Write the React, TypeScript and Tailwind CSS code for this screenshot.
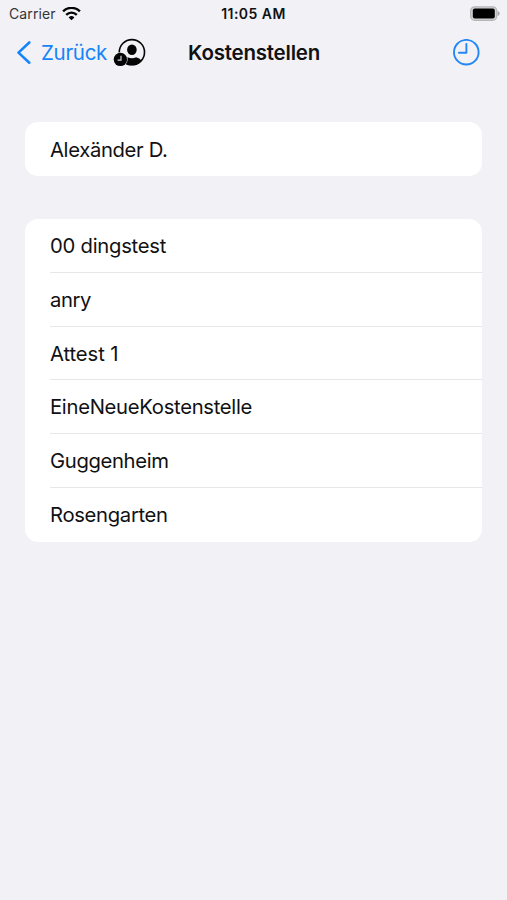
const costCenters = [
  { name: "00 dingstest", tracking: "tracking-[-0.25px]" },
  { name: "anry", tracking: "tracking-[-0.4px]" },
  { name: "Attest 1", tracking: "tracking-[-0.1px]" },
  { name: "EineNeueKostenstelle", tracking: "tracking-[-0.3px]" },
  { name: "Guggenheim", tracking: "tracking-[-0.35px]" },
  { name: "Rosengarten", tracking: "tracking-[-0.32px]" },
];

function WifiIcon() {
  return (
    <svg className="ml-[6px] h-[14px] w-[19px]" viewBox="0 0 19 14" fill="none">
      <path d="M1.1 4.4a11.8 11.8 0 0 1 16.8 0" stroke="#050505" strokeWidth="2.4" />
      <path d="M4.2 7.9a7.5 7.5 0 0 1 10.6 0" stroke="#050505" strokeWidth="2.3" />
      <path d="M9.5 13.2 6.6 10.4a4.2 4.2 0 0 1 5.8 0Z" fill="#050505" />
    </svg>
  );
}

function BatteryIcon() {
  return (
    <svg className="h-[16px] w-[32px]" viewBox="0 0 32 16">
      <rect x="2.7" y="0.9" width="26" height="13.4" rx="4" fill="#d3d3d5" stroke="#b5b5b7" strokeWidth="1.3" />
      <rect x="4.8" y="2.6" width="22" height="10" rx="2" fill="#000" />
      <path d="M29.6 5.1c1.5.4 2 1.3 2 2.4s-.5 2-2 2.5Z" fill="#a5a5a8" />
    </svg>
  );
}

function PersonClockIcon() {
  return (
    <svg className="ml-[6px] h-[30px] w-[34px]" viewBox="0 0 34 30">
      <defs>
        <clipPath id="portrait">
          <circle cx="18.9" cy="14.2" r="13" />
        </clipPath>
      </defs>
      <circle cx="18.9" cy="14.2" r="12.6" fill="none" stroke="#050505" strokeWidth="1.6" />
      <g clipPath="url(#portrait)" fill="#050505">
        <ellipse cx="18.9" cy="11.8" rx="4.8" ry="5.2" />
        <path d="M9 30c0-7.5 2.8-9.8 5.7-10.7 2.6 1.2 5.8 1.2 8.4 0 3.9 1 6.9 3.2 6.9 10.7Z" />
      </g>
      <circle cx="7.4" cy="21.4" r="7.2" fill="#f1f1f6" />
      <circle cx="7.4" cy="21.4" r="6.7" fill="#050505" />
      <path d="M8 17.8v4.3H4.6" fill="none" stroke="#d5d5d9" strokeWidth="1.2" />
    </svg>
  );
}

export default function App() {
  return (
    <div className="flex h-[900px] w-[507px] flex-col overflow-hidden bg-[#f1f1f6] font-['Inter','Liberation_Sans',sans-serif] text-[#111113]">
      <header>
        <div className="grid h-[28px] grid-cols-3 items-center pb-px pl-[9px] pr-[7px] leading-none">
          <div className="flex items-center">
            <span className="text-[14px] tracking-[0.1px] text-[#343436]">Carrier</span>
            <WifiIcon />
          </div>
          <span className="whitespace-nowrap pr-[2px] text-center text-[14px] font-semibold tracking-[0.45px]">11:05 AM</span>
          <div className="flex justify-end">
            <BatteryIcon />
          </div>
        </div>
        <div className="grid h-[50px] grid-cols-[188px_133px_1fr] items-center pb-px pr-[27px] leading-none">
          <button className="flex items-center pl-[16px] text-[#1684fb]">
            <svg className="h-[24px] w-[16px]" viewBox="0 0 16 24" fill="none" stroke="currentColor" strokeWidth="2.6" strokeLinecap="round" strokeLinejoin="round">
              <path d="M13.3 1.5 2.5 11.6 13.3 21.7" />
            </svg>
            <span className="ml-[9px] pt-px text-[20.5px] tracking-[-0.3px]">Zurück</span>
            <span>
              <PersonClockIcon />
            </span>
          </button>
          <h1 className="whitespace-nowrap pt-px text-[20.5px] font-semibold tracking-[-0.22px]">Kostenstellen</h1>
          <button className="justify-self-end">
            <svg className="h-[28px] w-[28px]" viewBox="0 0 28 28" fill="none" stroke="#2387f5" strokeWidth="1.9">
              <circle cx="14.3" cy="13.2" r="12.3" />
              <path d="M14.4 5V13.8H6.9" strokeLinecap="round" strokeLinejoin="round" />
            </svg>
          </button>
        </div>
      </header>
      <main className="px-[25px] pt-[44px] text-[20.25px] leading-none">
        <section className="flex h-[54px] items-center rounded-[13px] bg-white pl-[25px] pt-[2px] tracking-[-0.35px]">
          Alexänder D.
        </section>
        <ul className="mt-[43px] overflow-hidden rounded-[13px] bg-white pl-[25px]">
          {costCenters.map((item) => (
            <li key={item.name} className={`flex h-[53.8px] items-center border-b border-[#e7e7e9] pt-[1.5px] last:border-b-0 last:pt-0 ${item.tracking}`}>
              {item.name}
            </li>
          ))}
        </ul>
      </main>
    </div>
  );
}
